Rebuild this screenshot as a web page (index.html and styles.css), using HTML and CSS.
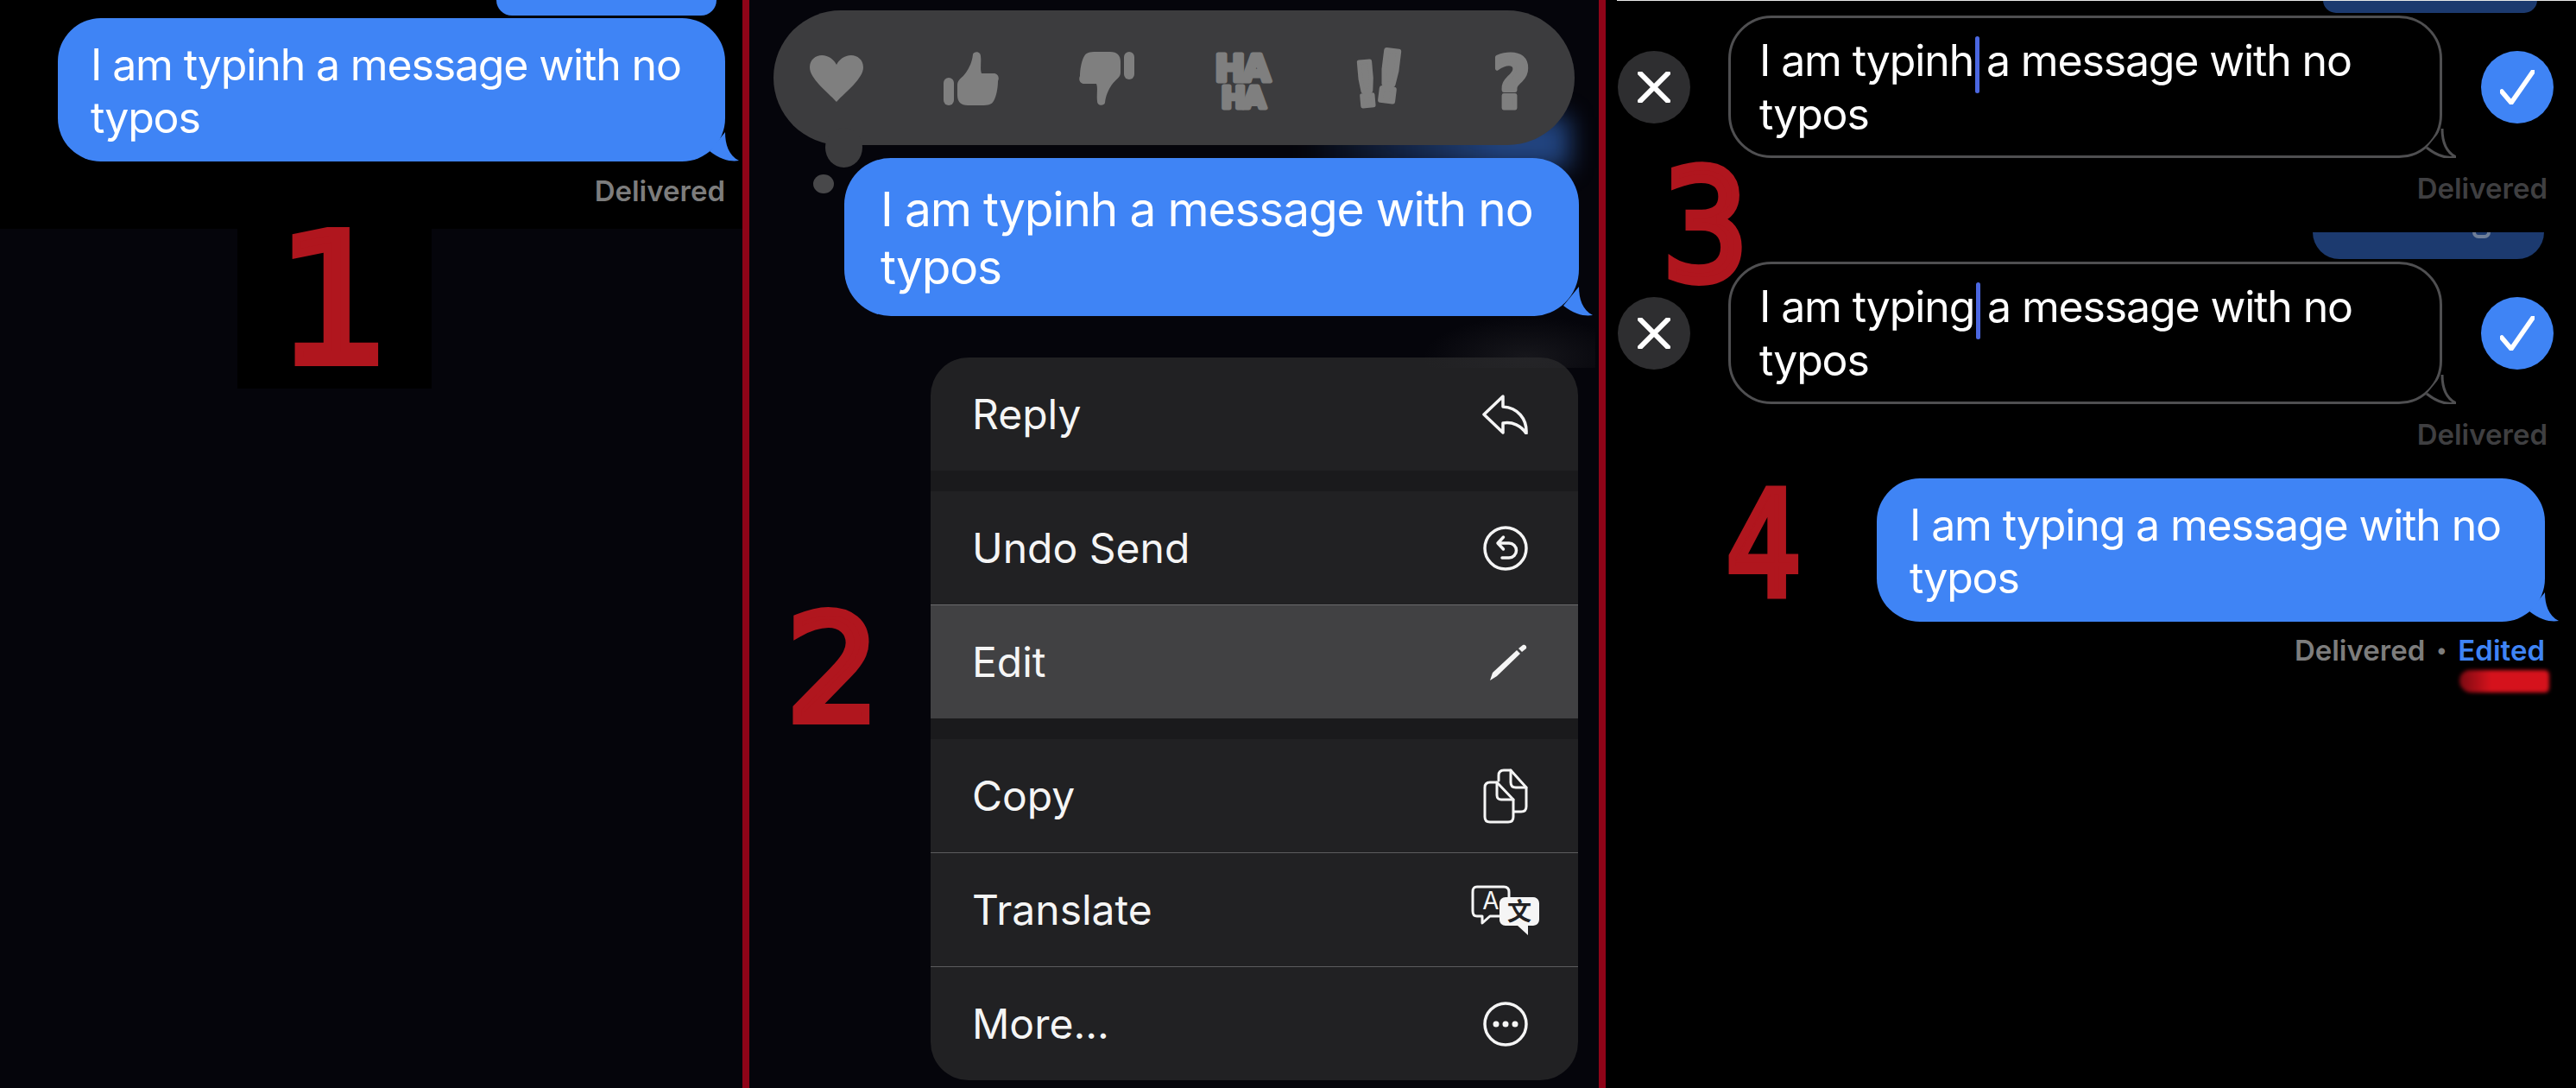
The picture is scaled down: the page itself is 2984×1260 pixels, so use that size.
FILE: index.html
```html
<!DOCTYPE html>
<html lang="en">
<head>
<meta charset="UTF-8">
<title>Editing a message</title>
<link rel="stylesheet" href="styles.css">
</head>
<body>
<svg class="defs" width="0" height="0">
  <symbol id="tail" viewBox="0 0 40 34">
    <path d="M24 0C24 14 28 27 40 33C32 34.5 20 33 6 22"/>
  </symbol>
</svg>

<div class="panel panel-one">
  <div class="top-strip">
    <div class="peek peek-one"></div>
    <div class="bubble blue">I am typinh a message with no<br>typos
      <svg class="tail"><use href="#tail"/></svg>
    </div>
    <div class="status">Delivered</div>
  </div>
  <div class="digit-box"><span class="digit digit-one">1</span></div>
</div>

<div class="panel panel-two">
  <div class="glow"></div>
  <div class="patch"></div>
  <div class="reactions">
    <svg class="react heart" viewBox="0 0 62 54"><path d="M31 54C20 42 0 27 0 14C0 5 7 0 14 0C22 0 28 5 31 11C34 5 40 0 48 0C55 0 62 5 62 14C62 27 42 42 31 54Z"/></svg>
    <svg class="react thumb" viewBox="0 0 64 62"><rect x="0" y="30" width="12" height="32" rx="6"/><path d="M34 3C35-1 43-1 43 5C44 12 42 20 44 25H58C63 25 65 30 63 34C63 42 61 52 58 57C56 61 52 62 44 62H28C20 62 16 58 16 50V38C16 32 22 30 26 24C30 18 33 12 34 3Z"/></svg>
    <svg class="react thumb" viewBox="0 0 64 62"><g transform="rotate(180 32 31)"><rect x="0" y="30" width="12" height="32" rx="6"/><path d="M34 3C35-1 43-1 43 5C44 12 42 20 44 25H58C63 25 65 30 63 34C63 42 61 52 58 57C56 61 52 62 44 62H28C20 62 16 58 16 50V38C16 32 22 30 26 24C30 18 33 12 34 3Z"/></g></svg>
    <svg class="react-text" width="120" height="130" viewBox="-20 -25 120 130">
      <text class="haha" text-anchor="middle"><tspan x="40" y="43.500">HA</tspan><tspan class="haha-low" x="41" y="74.500">HA</tspan></text>
    </svg>
    <svg class="react-text" width="120" height="130" viewBox="-30 -25 120 130">
      <text class="bang-low" text-anchor="middle" x="17.500" y="72.500" transform="rotate(-5 17.500 45)">!</text>
      <text class="bang-high" text-anchor="middle" x="44.500" y="67" transform="rotate(7 44.500 40)">!</text>
    </svg>
    <svg class="react-text" width="120" height="130" viewBox="-30 -25 120 130">
      <text class="what" text-anchor="middle" transform="translate(30 74.500) scale(0.9 1)">?</text>
    </svg>
    <div class="dot dot-big"></div>
    <div class="dot dot-small"></div>
  </div>
  <div class="bubble blue large">I am typinh a message with no<br>typos
    <svg class="tail"><use href="#tail"/></svg>
  </div>
  <div class="menu">
    <div class="menu-row"><span>Reply</span>
      <svg class="ico" width="54" height="46" viewBox="0 0 54 46"><path class="line" d="M25 2L3 23L25 44V33C36 31 46 36 52 45C53 28 42 15 25 14Z"/></svg>
    </div>
    <div class="menu-gap"></div>
    <div class="menu-row"><span>Undo Send</span>
      <svg class="ico" width="52" height="52" viewBox="0 0 52 52"><circle class="line" cx="26" cy="26" r="24"/><path class="line" d="M18 20H30A8.5 8.5 0 0 1 30 37H22M23.500 13L17 20L23.500 27"/></svg>
    </div>
    <div class="menu-row active"><span>Edit</span>
      <svg class="ico" width="44" height="42" viewBox="0 0 44 42"><path class="fill" d="M0 42L3 33L31 7L35 11L8 37Z"/><path class="fill" d="M33 5L38 1C40 0 43 2 42 5L37 9Z"/></svg>
    </div>
    <div class="menu-gap"></div>
    <div class="menu-row"><span>Copy</span>
      <svg class="ico" width="52" height="64" viewBox="0 0 52 64"><path class="line thin" d="M18 14V8C18 4 20 2 24 2H32L50 22V44C50 48 48 50 44 50H36"/><path class="line thin" d="M32 2V16C32 20 34 22 38 22H50"/><path class="line thin" d="M2 22C2 18 4 16 8 16H16L35 36V56C35 60 33 62 29 62H8C4 62 2 60 2 56Z"/><path class="line thin" d="M16 16V31C16 34 18 36 21 36H35"/></svg>
    </div>
    <div class="menu-row divided"><span>Translate</span>
      <svg class="ico wide" width="80" height="58" viewBox="0 0 80 58">
        <path class="line thin" d="M7 2H38C42 2 44 4 44 8V30C44 34 42 36 38 36H22L13 44V36H7C3 36 2 34 2 30V8C2 4 3 2 7 2Z"/>
        <text class="tr-a" x="23" y="28">A</text>
        <path class="fill" d="M40 14H72C76 14 79 17 79 21V40C79 44 76 47 72 47H66L66 58L54 47H40C36 47 33 44 33 40V21C33 17 36 14 40 14Z"/>
        <text class="tr-x" x="56" y="41">文</text>
      </svg>
    </div>
    <div class="menu-row divided"><span>More...</span>
      <svg class="ico" width="52" height="52" viewBox="0 0 52 52"><circle class="line" cx="26" cy="26" r="24"/><circle class="fill" cx="15" cy="26" r="3.500"/><circle class="fill" cx="26" cy="26" r="3.500"/><circle class="fill" cx="37" cy="26" r="3.500"/></svg>
    </div>
  </div>
  <span class="digit digit-two">2</span>
</div>

<div class="panel panel-three">
  <div class="peek faded peek-a"></div>
  <div class="edit-row">
    <div class="round cancel"><svg width="38" height="36" viewBox="0 0 38 36"><path d="M3 2L35 34M35 2L3 34"/></svg></div>
    <div class="bubble outline">I am typinh<span class="caret"></span> a message with no<br>typos
      <svg class="tail"><use href="#tail"/></svg>
    </div>
    <div class="round confirm"><svg width="40" height="40" viewBox="0 0 40 40"><path d="M2 25L13 38L38 2"/></svg></div>
  </div>
  <div class="status dim">Delivered</div>
  <div class="peek faded peek-b"></div>
  <div class="edit-row">
    <div class="round cancel"><svg width="38" height="36" viewBox="0 0 38 36"><path d="M3 2L35 34M35 2L3 34"/></svg></div>
    <div class="bubble outline">I am typing<span class="caret"></span> a message with no<br>typos
      <svg class="tail"><use href="#tail"/></svg>
    </div>
    <div class="round confirm"><svg width="40" height="40" viewBox="0 0 40 40"><path d="M2 25L13 38L38 2"/></svg></div>
  </div>
  <div class="status dim">Delivered</div>
  <div class="bubble blue final">I am typing a message with no<br>typos
    <svg class="tail"><use href="#tail"/></svg>
  </div>
  <div class="status final-status">Delivered<span class="sep">•</span><span class="edited">Edited</span></div>
  <div class="smear"></div>
  <span class="digit digit-three">3</span>
  <span class="digit digit-four">4</span>
</div>
</body>
</html>
```

FILE: styles.css
```css
html, body {
  margin: 0;
  height: 1260px;
  overflow: hidden;
  background: #000;
}
body {
  display: flex;
  font-family: Inter, "Liberation Sans", sans-serif;
  color: #fff;
}
.defs {
  position: absolute;
}

/* panels */
.panel {
  position: relative;
  height: 1260px;
  display: flex;
  flex-direction: column;
  flex: none;
  overflow: hidden;
}
.panel-one {
  width: 860px;
  background: #05050b;
  border-right: 8px solid #8f0418;
}
.top-strip {
  height: 265px;
  background: #000;
  display: flex;
  flex-direction: column;
  align-items: flex-end;
  padding-right: 20px;
  box-sizing: border-box;
}
.digit-box {
  position: relative;
  width: 225px;
  height: 185px;
  margin-left: 275px;
  background: #000;
}
.panel-two {
  width: 984px;
  background: #05050b;
  border-right: 8px solid #8f0418;
  padding-top: 12px;
  height: 1248px;
  align-items: flex-end;
}
.panel-three {
  flex: 1;
  background: #000;
  display: flex;
  flex-direction: column;
  align-items: flex-end;
}
.panel-three::before {
  content: "";
  position: absolute;
  left: 13px;
  right: 0;
  top: 0;
  height: 1px;
  background: #e8e8e8;
}

/* bubbles */
.bubble {
  position: relative;
  box-sizing: border-box;
  flex: none;
  font-size: 50px;
  line-height: 61px;
  letter-spacing: -1.150px;
  white-space: nowrap;
}
.blue {
  background: #3f84f5;
}
.panel-one .bubble {
  width: 773px;
  height: 166px;
  margin-top: 3px;
  padding: 24px 0 0 38px;
  border-radius: 50px;
}
.large {
  width: 851px;
  height: 183px;
  margin: 15px 23px 0 0;
  padding: 26px 0 0 42px;
  font-size: 55px;
  line-height: 67px;
  border-radius: 54px;
}
.final {
  width: 774px;
  height: 166px;
  margin: 0 36px 0 0;
  padding: 24px 0 0 38px;
  border-radius: 50px;
}
.outline {
  width: 827px;
  height: 165px;
  margin-left: -1px;
  padding: 19px 0 0 33px;
  border: 3px solid #4f4f51;
  border-radius: 50px;
  background: #000;
}
.tail {
  position: absolute;
  right: -16px;
  bottom: 0;
  width: 40px;
  height: 34px;
  fill: #3f84f5;
  overflow: visible;
}
.outline .tail {
  right: -19px;
  bottom: -3px;
  fill: #000;
  stroke: #4f4f51;
  stroke-width: 3px;
}
.peek {
  flex: none;
  border-radius: 0 0 50px 50px;
  background: #3f84f5;
}
.peek-one {
  width: 255px;
  height: 18px;
  margin-right: 10px;
}
.faded {
  background: #1c3a6f;
}
.peek-a {
  width: 248px;
  height: 15px;
  margin: 0 45px 3px 0;
}
.peek-b {
  position: relative;
  width: 268px;
  height: 31px;
  margin: 0 37px 3px 0;
  border-radius: 0 0 60px 60px;
}
.peek-b::after {
  content: "";
  position: absolute;
  left: 185px;
  top: 0;
  width: 13px;
  height: 3px;
  border: 4px solid #6f7f99;
  border-top: none;
  border-radius: 0 0 10px 10px;
}
.caret {
  display: inline-block;
  width: 5px;
  height: 66px;
  margin: -6px -5px -6px 2px;
  vertical-align: -14px;
  border-radius: 3px;
  background: #4b67e0;
}

/* status lines */
.status {
  flex: none;
  font-size: 33px;
  font-weight: 600;
  line-height: 40px;
  color: #7d7d7d;
  margin-top: 14px;
}
.dim {
  color: #3f3f41;
  height: 40px;
  margin: 15px 33px 31px 0;
}
.final-status {
  margin: 13px 36px 0 0;
  display: flex;
  align-items: center;
}
.sep {
  margin: 0 13px;
  font-size: 24px;
}
.edited {
  color: #3f84f5;
}
.smear {
  flex: none;
  width: 104px;
  height: 26px;
  margin: 3px 31px 0 0;
  border-radius: 14px 6px 6px 16px;
  background: linear-gradient(to right, #7a0a12, #d5121c 35%);
  filter: blur(2px);
}

/* edit rows */
.edit-row {
  flex: none;
  width: 100%;
  box-sizing: border-box;
  display: flex;
  align-items: center;
  padding-left: 14px;
  gap: 45px;
}
.round {
  flex: none;
  width: 84px;
  height: 84px;
  border-radius: 50%;
  display: flex;
  align-items: center;
  justify-content: center;
}
.round svg {
  fill: none;
  stroke: #fff;
  stroke-linecap: round;
  stroke-linejoin: round;
}
.cancel {
  background: #2e2e30;
}
.cancel svg {
  stroke-width: 6px;
}
.confirm {
  background: #3f84f5;
}
.confirm svg {
  stroke-width: 5.500px;
}

/* reaction bar */
.reactions {
  position: relative;
  flex: none;
  width: 928px;
  height: 156px;
  margin-right: 28px;
  border-radius: 78px;
  background: #3c3c3e;
  display: grid;
  grid-template-columns: repeat(6, 156.500px);
  justify-content: center;
  justify-items: center;
  align-items: center;
}
.react {
  fill: #7f7f7f;
}
.heart {
  width: 62px;
  height: 54px;
  margin-top: 2px;
}
.thumb {
  width: 64px;
  height: 62px;
  margin-top: 2px;
}
.react-text text {
  font-family: "DejaVu Sans", sans-serif;
  font-weight: 700;
  fill: #7f7f7f;
  stroke: #7f7f7f;
  stroke-linejoin: round;
  stroke-width: 5px;
}
.haha {
  font-size: 42px;
  letter-spacing: -3px;
}
.haha-low {
  font-size: 34px;
}
.bang-low {
  font-size: 70px;
}
.react-text .bang-high {
  font-size: 80px;
  stroke-width: 6px;
}
.what {
  font-size: 84px;
}
.dot {
  position: absolute;
  border-radius: 50%;
  background: #3c3c3e;
}
.dot-big {
  left: 60px;
  top: 136px;
  width: 43px;
  height: 46px;
}
.dot-small {
  left: 46px;
  top: 190px;
  width: 24px;
  height: 22px;
  background: #48484a;
}

/* glow behind bubble */
.glow {
  position: absolute;
  left: 640px;
  top: 135px;
  width: 310px;
  height: 60px;
  background: linear-gradient(to right, rgba(63, 132, 245, 0), rgba(63, 132, 245, 0.5) 75%);
  filter: blur(14px);
}
.patch {
  position: absolute;
  left: 780px;
  top: 366px;
  width: 200px;
  height: 60px;
  background: radial-gradient(ellipse at 60% 80%, rgba(40, 40, 44, 0.5), rgba(40, 40, 44, 0) 70%);
}

/* context menu */
.menu {
  flex: none;
  width: 750px;
  margin: 48px 24px 0 0;
  border-radius: 44px;
  overflow: hidden;
  background: #212123;
}
.menu-row {
  height: 131px;
  box-sizing: border-box;
  display: flex;
  align-items: center;
  justify-content: space-between;
  padding: 0 58px 0 48px;
  font-size: 48px;
  color: #f5f5f5;
}
.menu-gap {
  height: 24px;
  background: #1a1a1c;
}
.active {
  background: #414143;
  border-top: 1px solid #6a6a6c;
  height: 132px;
}
.divided {
  border-top: 1px solid #5c5c5e;
  height: 132px;
}
.ico {
  flex: none;
}
.wide {
  margin-right: -14px;
}
.line {
  fill: none;
  stroke: #f5f5f5;
  stroke-width: 3.500px;
  stroke-linejoin: round;
  stroke-linecap: round;
}
.thin {
  stroke-width: 3px;
}
.fill {
  fill: #f5f5f5;
}
.tr-a {
  font-size: 28px;
  fill: #f5f5f5;
  text-anchor: middle;
}
.tr-x {
  font-family: "Noto Sans CJK SC", sans-serif;
  font-size: 28px;
  font-weight: 700;
  fill: #212123;
  text-anchor: middle;
}

/* hand written numbers */
.digit {
  position: absolute;
  font-family: "DejaVu Sans", sans-serif;
  line-height: 1;
  color: #b0161e;
  -webkit-text-stroke: 10px #b0161e;
}
.digit-one {
  left: 46px;
  top: -20px;
  font-size: 206px;
}
.digit-two {
  left: 43px;
  top: 690px;
  font-size: 170px;
}
.digit-three {
  left: 65px;
  top: 176px;
  font-size: 176px;
  transform: scaleX(0.9);
  transform-origin: left;
}
.digit-four {
  left: 140px;
  top: 549px;
  font-size: 166px;
  transform: scaleX(0.82);
  transform-origin: left;
}
```
